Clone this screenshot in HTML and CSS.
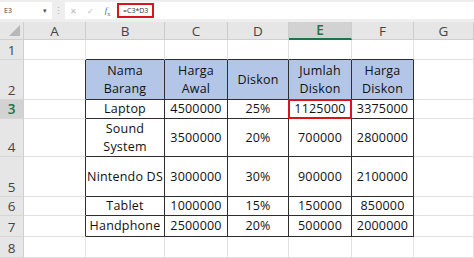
FILE: index.html
```html
<!DOCTYPE html>
<html lang="id">
  <head>
    <meta charset="UTF-8" />
    <title>Jumlah Diskon</title>
    <link rel="stylesheet" href="styles.css">
  </head>
  <body>
    <div class="formula-bar">
      <div class="name-box">
        <span>E3</span>
        <span class="caret">&#9662;</span>
      </div>
      <span class="dots">&#8942;</span>
      <div class="fx-area">
        <span class="icon">&#10005;</span>
        <span class="icon">&#10003;</span>
        <span class="icon fx"><i>f</i><sub>x</sub></span>
        <span class="formula">=C3*D3</span>
      </div>
    </div>

    <div class="sheet">
      <!-- column headers -->
      <div class="corner"></div>
      <div class="col-head">A</div>
      <div class="col-head">B</div>
      <div class="col-head">C</div>
      <div class="col-head">D</div>
      <div class="col-head active">E</div>
      <div class="col-head">F</div>
      <div class="col-head">G</div>

      <!-- row 1 -->
      <div class="row-head">1</div>
      <div class="cell"></div>
      <div class="cell above"></div>
      <div class="cell above"></div>
      <div class="cell above"></div>
      <div class="cell above"></div>
      <div class="cell above"></div>
      <div class="cell"></div>

      <!-- row 2 -->
      <div class="row-head">2</div>
      <div class="cell before"></div>
      <div class="cell tb th">Nama<br>Barang</div>
      <div class="cell tb th">Harga<br>Awal</div>
      <div class="cell tb th">Diskon</div>
      <div class="cell tb th">Jumlah<br>Diskon</div>
      <div class="cell tb th">Harga<br>Diskon</div>
      <div class="cell"></div>

      <!-- row 3 -->
      <div class="row-head active">3</div>
      <div class="cell before"></div>
      <div class="cell tb">Laptop</div>
      <div class="cell tb">4500000</div>
      <div class="cell tb">25%</div>
      <div class="cell tb marked">1125000</div>
      <div class="cell tb">3375000</div>
      <div class="cell"></div>

      <!-- row 4 -->
      <div class="row-head">4</div>
      <div class="cell before"></div>
      <div class="cell tb">Sound<br>System</div>
      <div class="cell tb">3500000</div>
      <div class="cell tb">20%</div>
      <div class="cell tb">700000</div>
      <div class="cell tb">2800000</div>
      <div class="cell"></div>

      <!-- row 5 -->
      <div class="row-head">5</div>
      <div class="cell before"></div>
      <div class="cell tb">Nintendo DS</div>
      <div class="cell tb">3000000</div>
      <div class="cell tb">30%</div>
      <div class="cell tb">900000</div>
      <div class="cell tb">2100000</div>
      <div class="cell"></div>

      <!-- row 6 -->
      <div class="row-head">6</div>
      <div class="cell before"></div>
      <div class="cell tb">Tablet</div>
      <div class="cell tb">1000000</div>
      <div class="cell tb">15%</div>
      <div class="cell tb">150000</div>
      <div class="cell tb">850000</div>
      <div class="cell"></div>

      <!-- row 7 -->
      <div class="row-head">7</div>
      <div class="cell before"></div>
      <div class="cell tb">Handphone</div>
      <div class="cell tb">2500000</div>
      <div class="cell tb">20%</div>
      <div class="cell tb">500000</div>
      <div class="cell tb">2000000</div>
      <div class="cell"></div>

      <!-- row 8 -->
      <div class="row-head">8</div>
      <div class="cell"></div>
      <div class="cell"></div>
      <div class="cell"></div>
      <div class="cell"></div>
      <div class="cell"></div>
      <div class="cell"></div>
      <div class="cell"></div>
    </div>
  </body>
</html>
```

FILE: styles.css
```css
* {
  box-sizing: border-box;
  margin: 0;
  padding: 0;
}

body {
  width: 474px;
  height: 258px;
  overflow: hidden;
  background-color: #fff;
  font-family: "Open Sans", "Liberation Sans", sans-serif;
  color: #111;
}

/* formula bar */

.formula-bar {
  display: flex;
  align-items: center;
  height: 22px;
  padding: 2px 0 3px 0;
  background-color: #eeeeee;
}

.name-box {
  display: flex;
  align-items: center;
  justify-content: space-between;
  width: 52px;
  height: 100%;
  padding: 0 5px 0 4px;
  background-color: #fff;
  font-size: 7px;
  color: #444;
}

.caret {
  font-size: 7px;
  color: #555;
}

.dots {
  width: 13px;
  text-align: center;
  font-size: 9px;
  color: #aaa;
}

.fx-area {
  display: flex;
  align-items: center;
  flex: 1;
  height: 100%;
  background-color: #fff;
}

.icon {
  width: 17px;
  text-align: center;
  font-size: 8px;
  color: #b8b8b8;
}

.fx {
  font-family: "Liberation Serif", serif;
  font-size: 9px;
  color: #666;
}

.fx sub {
  font-size: 6px;
}

.formula {
  margin-left: 1px;
  padding: 1px 4px;
  border: 2px solid #d9141c;
  font-size: 7px;
  color: #333;
}

/* sheet grid */

.sheet {
  display: grid;
  grid-template-columns: 24px 62px 79px 63px 61px 63px 62px 1fr;
  grid-template-rows: 18px 20px 40px 19px 38px 40px 19px 21px 1fr;
  height: 236px;
}

.corner {
  position: relative;
  background-color: #e6e6e6;
  border-right: 1px solid #cfcfcf;
  border-bottom: 1px solid #cfcfcf;
}

.corner::after {
  content: "";
  position: absolute;
  right: 3px;
  bottom: 3px;
  width: 11px;
  height: 11px;
  background-color: #b7b7b7;
  clip-path: polygon(100% 0, 100% 100%, 0 100%);
}

.col-head {
  display: flex;
  align-items: center;
  justify-content: center;
  background-color: #e6e6e6;
  border-right: 1px solid #cdcdcd;
  border-bottom: 1px solid #cfcfcf;
  font-size: 13.5px;
  color: #444;
}

.col-head.active {
  background-color: #d2d2d2;
  border-bottom: 2px solid #217346;
  color: #217346;
  font-weight: 600;
}

.row-head {
  display: flex;
  align-items: flex-end;
  justify-content: center;
  background-color: #e6e6e6;
  border-right: 1px solid #cfcfcf;
  border-bottom: 1px solid #d6d6d6;
  font-size: 13.5px;
  line-height: 18px;
  color: #444;
}

.row-head.active {
  background-color: #d2d2d2;
  color: #217346;
  font-weight: 600;
}

.cell {
  display: flex;
  align-items: center;
  justify-content: center;
  border-right: 1px solid #e1e1e1;
  border-bottom: 1px solid #e1e1e1;
  font-size: 12.5px;
  line-height: 18px;
  text-align: center;
  letter-spacing: 0.2px;
}

.cell.above {
  border-bottom-color: #2e2e2e;
}

.cell.before {
  border-right-color: #2e2e2e;
}

.cell.tb {
  border-right-color: #2e2e2e;
  border-bottom-color: #2e2e2e;
}

.cell.th {
  background-color: #b4c6e7;
}

.cell.marked {
  position: relative;
}

.cell.marked::after {
  content: "";
  position: absolute;
  top: -1px;
  left: -1px;
  right: -1px;
  bottom: -1px;
  border: 2px solid #d9141c;
}
```
